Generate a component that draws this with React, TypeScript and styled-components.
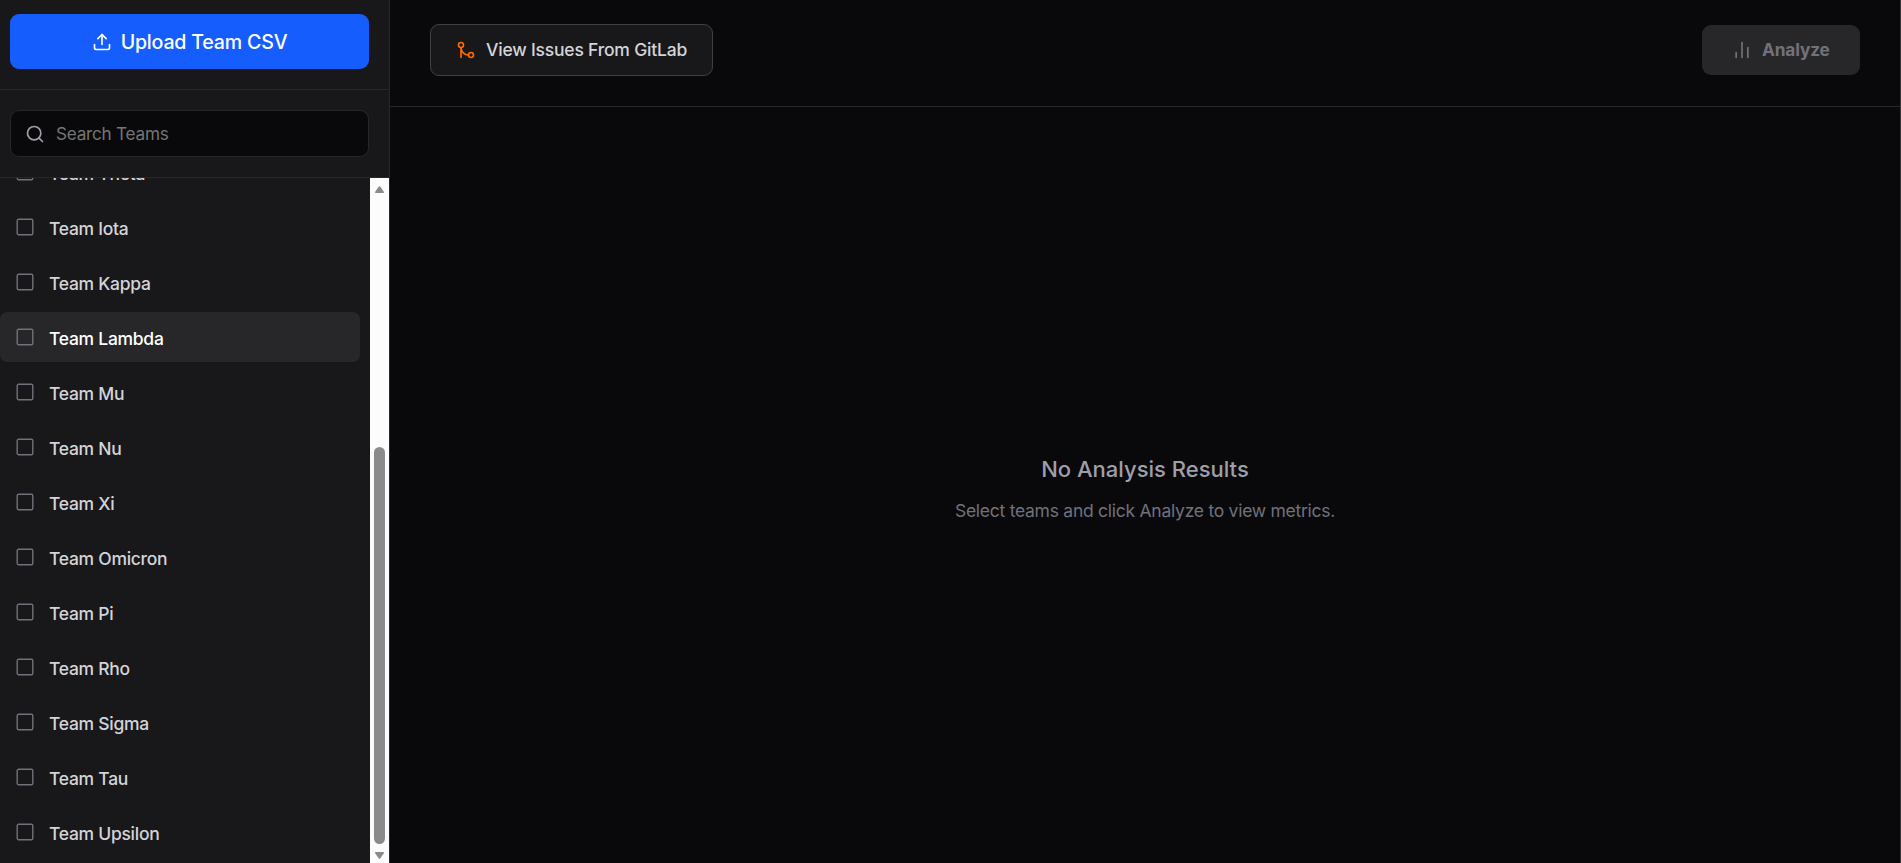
import React from "react";
import styled, { createGlobalStyle } from "styled-components";
import { Upload, Search, GitMerge, ChartNoAxesColumn } from "lucide-react";

const GlobalStyle = createGlobalStyle`
  *, *::before, *::after { box-sizing: border-box; }
  body { margin: 0; background: #09090b; overflow: hidden; }
  button, input { font: inherit; }
`;

const Page = styled.div`
  display: flex;
  height: 863px;
  background: #09090b;
  border-right: 1px solid #39393b;
  font-family: Inter, "Liberation Sans", sans-serif;
  font-size: 17.5px;
  letter-spacing: -0.2px;
  color: #d4d4d8;
`;

const Sidebar = styled.aside`
  display: flex;
  flex-direction: column;
  flex: 0 0 390px;
  background: #18181b;
  border-right: 1px solid #27272a;
`;

const SidebarSection = styled.div<{ $top: number }>`
  padding: ${(p) => p.$top}px 20px 20px 10px;
  border-bottom: 1px solid #27272a;
`;

const Label = styled.span<{ $spacing?: number }>`
  white-space: nowrap;
  letter-spacing: ${(p) => p.$spacing ?? -0.2}px;
`;

const UploadButton = styled.button`
  display: flex;
  align-items: center;
  justify-content: center;
  gap: 9px;
  width: 359px;
  height: 55px;
  padding: 0;
  border: 0;
  border-radius: 9px;
  background: #155dfc;
  color: #fff;
  font-size: 19.6px;
  font-weight: 500;
`;

const SearchBox = styled.label`
  display: flex;
  align-items: center;
  gap: 11px;
  width: 359px;
  height: 47px;
  padding: 0 14px;
  border: 1px solid #27272a;
  border-radius: 9px;
  background: #09090b;
  color: #9f9fa9;
`;

const SearchInput = styled.input`
  flex: 1;
  min-width: 0;
  padding: 0;
  border: 0;
  outline: 0;
  background: transparent;
  color: #d4d4d8;
  font-size: 17.2px;
  letter-spacing: -0.25px;
  &::placeholder { color: #757575; opacity: 1; }
`;

const ListArea = styled.div`
  display: flex;
  flex: 1;
  min-height: 0;
`;

const TeamList = styled.ul`
  display: flex;
  flex: 1;
  flex-direction: column;
  justify-content: flex-end;
  gap: 5px;
  margin: 0;
  padding: 0 10px 6px 0;
  overflow: hidden;
  list-style: none;
`;

const TeamRow = styled.li<{ $active: boolean }>`
  display: flex;
  flex: 0 0 50px;
  align-items: center;
  gap: 15px;
  padding-left: 16px;
  border-radius: 7px;
  background: ${(p) => (p.$active ? "#27272a" : "transparent")};
  color: ${(p) => (p.$active ? "#fff" : "#d4d4d8")};
  font-weight: 500;
`;

const CheckIcon = styled.svg`
  flex: none;
  color: #71717b;
`;

const TeamName = styled(Label)`
  padding-top: 2px;
`;

const ScrollTrack = styled.div`
  display: flex;
  flex: 0 0 19px;
  flex-direction: column;
  align-items: center;
  justify-content: space-between;
  padding: 8px 0 4px;
  background: #fcfcfc;
`;

const ScrollThumb = styled.div`
  width: 11px;
  height: 397px;
  margin: auto 0 8px;
  border-radius: 6px;
  background: #8b8b8b;
`;

const Main = styled.main`
  display: flex;
  flex: 1;
  flex-direction: column;
`;

const Toolbar = styled.header`
  display: flex;
  align-items: center;
  justify-content: space-between;
  height: 107px;
  padding: 0 40px 7px;
  border-bottom: 1px solid #27272a;
`;

const IssuesButton = styled.button`
  display: flex;
  align-items: center;
  gap: 10px;
  width: 283px;
  height: 52px;
  padding: 0 0 0 25px;
  border: 1px solid #3f3f46;
  border-radius: 9px;
  background: #18181b;
  color: #d4d4d8;
  font-weight: 500;
  svg { color: #ff6900; }
`;

const AnalyzeButton = styled.button`
  display: flex;
  align-items: center;
  gap: 10px;
  width: 158px;
  height: 50px;
  padding: 0 0 0 30px;
  border: 0;
  border-radius: 9px;
  background: #27272a;
  color: #71717b;
  font-size: 17.3px;
  font-weight: 650;
`;

const EmptyState = styled.section`
  display: flex;
  flex: 1;
  flex-direction: column;
  align-items: center;
  justify-content: center;
  gap: 12px;
  padding-top: 7px;
`;

const EmptyTitle = styled.h2`
  margin: 0;
  color: #9f9fa9;
  font-size: 22px;
  font-weight: 500;
  letter-spacing: 0;
  line-height: 32px;
`;

const EmptyText = styled.p`
  margin: 0;
  color: #71717b;
  font-size: 17.5px;
  letter-spacing: -0.26px;
  line-height: 27px;
`;

const teams = [
  "Theta", "Iota", "Kappa", "Lambda", "Mu", "Nu", "Xi",
  "Omicron", "Pi", "Rho", "Sigma", "Tau", "Upsilon",
];

const Arrow = ({ down = false }: { down?: boolean }) => (
  <svg width="9" height="7" viewBox="0 0 9 7" fill="#8b8b8b">
    <path d={down ? "M.5 0h8q.7.5.3 1.2L5.4 6.2q-.9 1.3-1.8 0L.2 1.2Q-.2.5.5 0" : "M.5 7h8q.7-.5.3-1.2L5.4.8q-.9-1.3-1.8 0L.2 5.8Q-.2 6.5.5 7"} />
  </svg>
);

export default function App() {
  return (
    <>
      <GlobalStyle />
      <Page>
        <Sidebar>
          <SidebarSection $top={14}>
            <UploadButton>
              <Upload size={20} />
              <Label $spacing={-0.2}>Upload Team CSV</Label>
            </UploadButton>
          </SidebarSection>
          <SidebarSection $top={20}>
            <SearchBox>
              <Search size={20} />
              <SearchInput placeholder="Search Teams" />
            </SearchBox>
          </SidebarSection>
          <ListArea>
            <TeamList>
              {teams.map((name) => (
                <TeamRow key={name} $active={name === "Lambda"}>
                  <CheckIcon width="18" height="18" viewBox="0 0 18 18" fill="none" stroke="currentColor" strokeWidth="1.4">
                    <rect x="1.2" y="1.2" width="15.6" height="15.6" rx="1.5" />
                  </CheckIcon>
                  <TeamName $spacing={-0.28}>Team {name}</TeamName>
                </TeamRow>
              ))}
            </TeamList>
            <ScrollTrack>
              <Arrow />
              <ScrollThumb />
              <Arrow down />
            </ScrollTrack>
          </ListArea>
        </Sidebar>
        <Main>
          <Toolbar>
            <IssuesButton>
              <GitMerge size={20} />
              <Label $spacing={-0.2}>View Issues From GitLab</Label>
            </IssuesButton>
            <AnalyzeButton>
              <ChartNoAxesColumn size={20} />
              <Label $spacing={-0.15}>Analyze</Label>
            </AnalyzeButton>
          </Toolbar>
          <EmptyState>
            <EmptyTitle>No Analysis Results</EmptyTitle>
            <EmptyText>Select teams and click Analyze to view metrics.</EmptyText>
          </EmptyState>
        </Main>
      </Page>
    </>
  );
}
